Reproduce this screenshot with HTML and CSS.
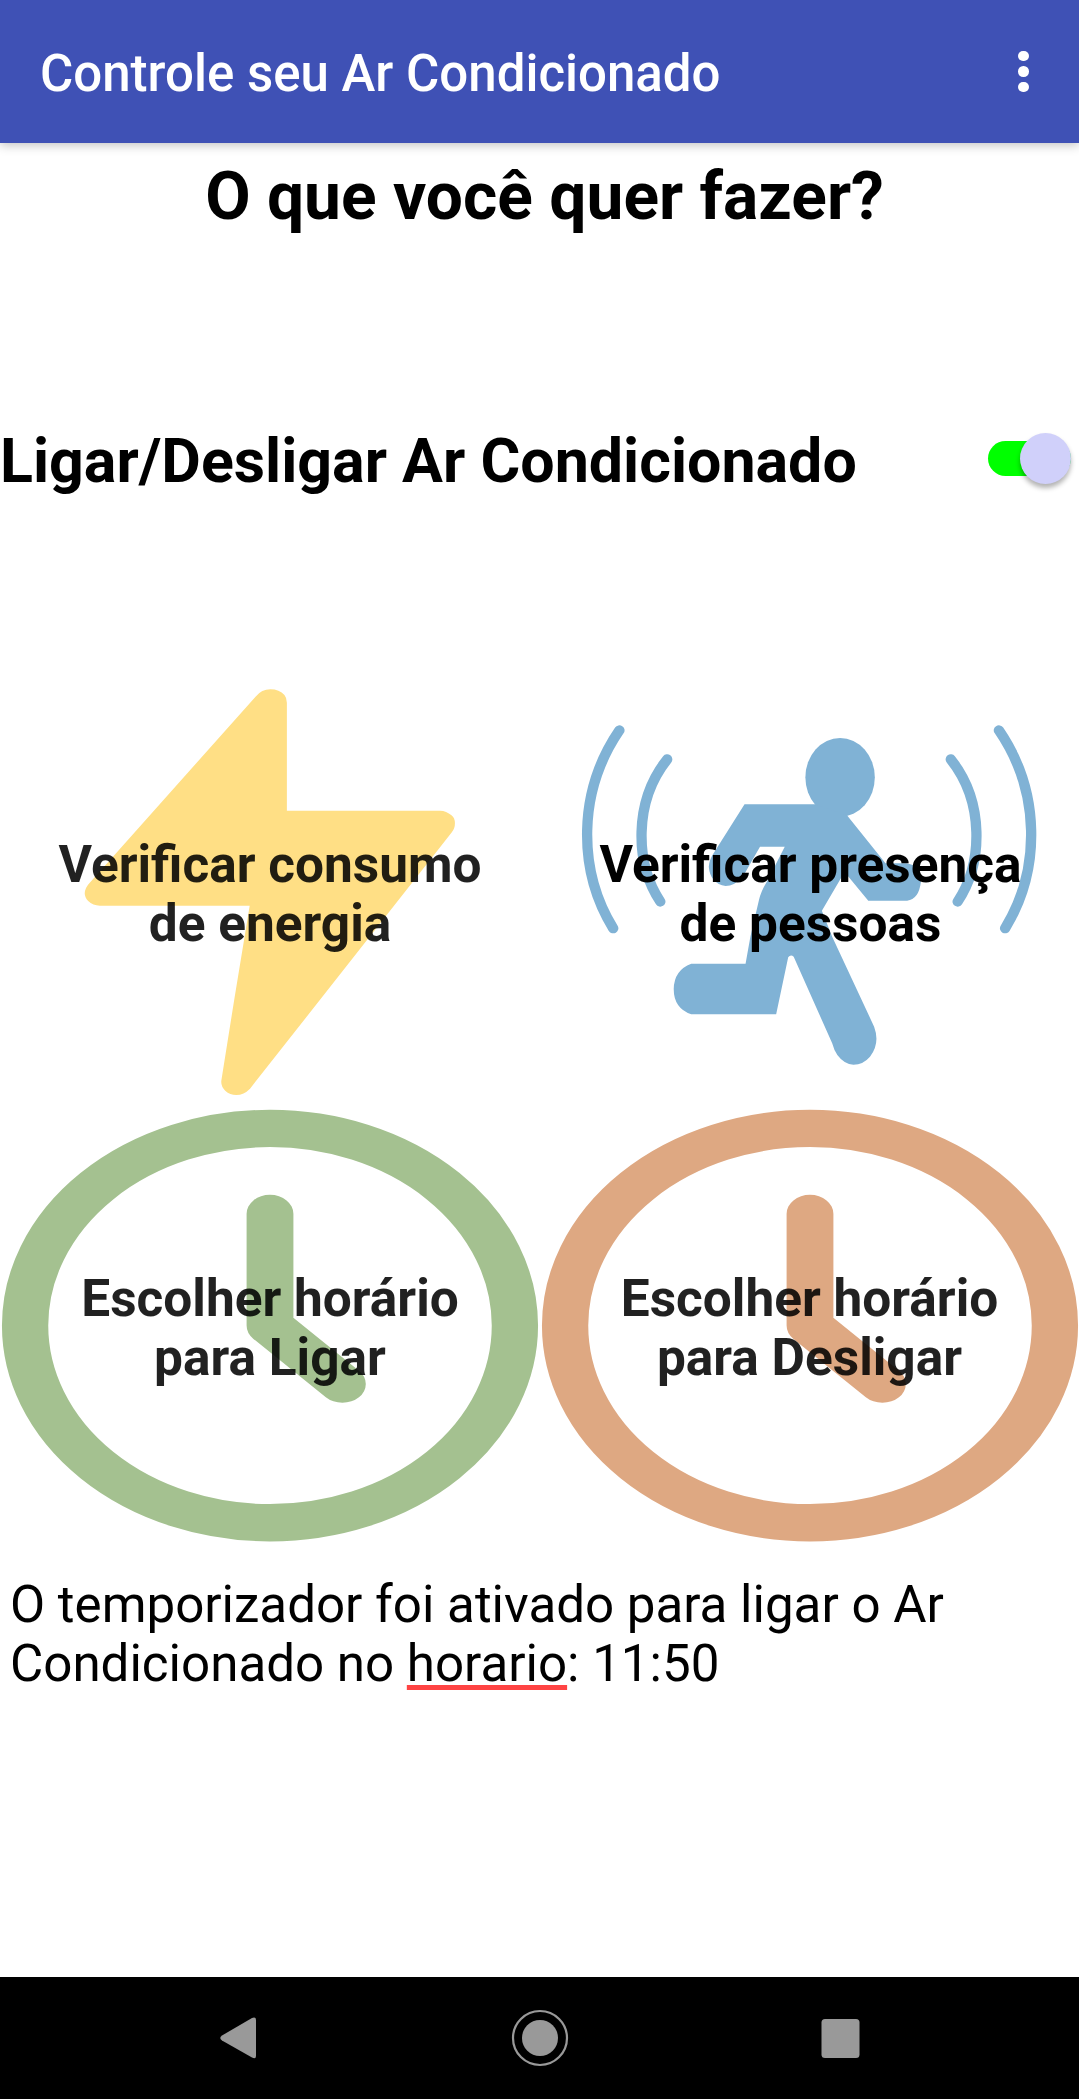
FILE: index.html
```html
<!DOCTYPE html>
<html lang="pt-BR">
<head>
<meta charset="utf-8">
<title>Controle seu Ar Condicionado</title>
<link rel="stylesheet" href="styles.css">
</head>
<body>
<header class="appbar">
  <h1 class="appbar-title">Controle seu Ar Condicionado</h1>
  <button class="menu" aria-label="Mais opções"><span class="dot"></span><span class="dot"></span><span class="dot"></span></button>
</header>
<main class="content">
  <h2 class="question">O que você quer fazer?</h2>
  <div class="power">
    <span class="power-label">Ligar/Desligar Ar Condicionado</span>
    <span class="switch" role="switch" aria-checked="true"><span class="thumb"></span></span>
  </div>
  <div class="grid">
    <button class="tile">
      <svg class="art" viewBox="0 12 1568 1302" preserveAspectRatio="none"><path fill="#ffdf85" d="M742 80Q760 58 785 58Q811 58 826 75Q833 84 833 98V422H1278Q1296 422 1311 436Q1321 444 1321 460Q1321 476 1312 487L726 1256Q708 1275 686 1275Q668 1275 654 1262Q640 1248 643 1230L680 990L725 707H290Q270 707 256 693Q246 683 246 670Q247 653 260 639Z"/></svg>
      <span class="label">Verificar consumo<br>de energia</span>
    </button>
    <button class="tile solid">
      <svg class="art soft" viewBox="0 12 1568 1302" preserveAspectRatio="none">
        <g fill="none" stroke="#80b2d5" stroke-width="30" stroke-linecap="round">
          <path d="M231 181C109 365 109 600 213 775M370 268C272 395 276 580 350 695M1335 181C1457 365 1457 600 1353 775M1195 268C1293 395 1289 580 1215 695"/>
        </g>
        <ellipse cx="873" cy="322" rx="101" ry="118" fill="#80b2d5"/>
        <path fill="#80b2d5" d="M595 403H800L893 436L1005 580H1065Q1108 585 1108 636Q1102 688 1068 692H955L886 606L820 722L850 800L972 1070Q990 1120 960 1160Q940 1184 912 1184Q885 1183 865 1155Q855 1140 850 1120L738 860Q729 852 722 862L687 1033H440Q389 1015 389 957Q390 900 440 881H598L612 800L637 690Q642 665 660 635L712 530H640L590 620Q565 648 540 648Q495 640 491 590Q493 568 505 550Z"/>
      </svg>
      <span class="label">Verificar presença<br>de pessoas</span>
    </button>
    <button class="tile timer">
      <svg class="art" viewBox="0 0 540 435" preserveAspectRatio="none"><g transform="translate(270 217.6) scale(1 .805)" fill="none" stroke="#a4c190"><circle r="244.9" stroke-width="46.3"/><path d="M0-139V0L72.4 72.5" stroke-width="46.8" stroke-linecap="round" stroke-linejoin="round"/></g></svg>
      <span class="label">Escolher horário<br>para Ligar</span>
    </button>
    <button class="tile timer">
      <svg class="art" viewBox="0 0 539 435" preserveAspectRatio="none"><g transform="translate(270 217.6) scale(1 .805)" fill="none" stroke="#dea882"><circle r="244.9" stroke-width="46.3"/><path d="M0-139V0L72.4 72.5" stroke-width="46.8" stroke-linecap="round" stroke-linejoin="round"/></g></svg>
      <span class="label">Escolher horário<br>para Desligar</span>
    </button>
  </div>
  <p class="status">O temporizador foi ativado para ligar o Ar<br>Condicionado no <span class="misspelled">horario</span>: 11:50</p>
</main>
<nav class="navbar">
  <svg class="nav-icons" viewBox="0 0 1079 122">
    <path fill="#999" d="M222 58.5L252 41Q256 39.500 256 43V79Q256 82.500 252 80.500L222 63.500Q218.500 61 222 58.500Z"/>
    <circle cx="540" cy="61" r="27" fill="none" stroke="#999" stroke-width="2.2"/>
    <circle cx="540" cy="61" r="18" fill="#999"/>
    <rect x="821.500" y="42" width="38" height="39" rx="3.500" fill="#999"/>
  </svg>
</nav>
</body>
</html>
```
FILE: styles.css
```css
* { box-sizing: border-box; }
body {
  margin: 0;
  width: 1079px;
  height: 2099px;
  display: flex;
  flex-direction: column;
  background: #fff;
  color: #000;
  font-family: Roboto, sans-serif;
  overflow: hidden;
}
button { border: 0; padding: 0; background: none; font: inherit; color: inherit; }
.appbar {
  height: 143px;
  flex: none;
  display: flex;
  align-items: center;
  justify-content: space-between;
  padding: 4px 46px 0 40px;
  background: #3f51b5;
  color: #fff;
  box-shadow: 0 2px 10px rgba(0, 0, 0, .25);
}
.appbar-title { margin: 0; font-size: 51px; font-weight: 500; line-height: 60px; white-space: nowrap; }
.menu { display: flex; flex-direction: column; gap: 5px; width: 15px; padding-bottom: 4px; }
.dot { width: 10.5px; height: 10.5px; border-radius: 50%; background: #fff; }
.content { flex: 1; display: flex; flex-direction: column; }
.question { margin: 16px 0 0; padding-left: 10px; text-align: center; font-size: 65.9px; line-height: 76px; font-weight: 700; }
.power { margin-top: 187px; height: 80px; display: flex; align-items: center; justify-content: space-between; padding-right: 8px; }
.power-label { font-size: 60.9px; font-weight: 700; line-height: 72px; white-space: nowrap; }
.switch { margin-bottom: 7px; display: flex; align-items: center; justify-content: flex-end; width: 83px; height: 35px; border-radius: 18px; background: #0f0; }
.thumb { width: 51px; height: 51px; border-radius: 50%; background: #d0d0fa; box-shadow: 0 4px 5px rgba(0, 0, 0, .3); }
.grid { margin-top: 172px; display: grid; grid-template-columns: 540px 539px; grid-template-rows: 434px 435px; }
.tile { position: relative; display: flex; align-items: center; justify-content: center; padding-top: 6px; color: rgba(0, 0, 0, .87); }
.timer { padding-top: 4px; }
.solid { padding-left: 2px; color: #000; }
.art { position: absolute; inset: 0; width: 100%; height: 100%; }
.soft { filter: blur(.7px); }
.label { position: relative; font-size: 51.4px; font-weight: 700; line-height: 59px; text-align: center; }
.status { margin: 32px 0 0; padding-left: 10px; font-size: 51.1px; line-height: 59px; }
.misspelled { text-decoration: underline #ff4444 5px; text-decoration-skip-ink: none; text-underline-offset: 4px; }
.navbar { flex: none; height: 122px; background: #000; }
.nav-icons { display: block; width: 100%; height: 100%; }
```
